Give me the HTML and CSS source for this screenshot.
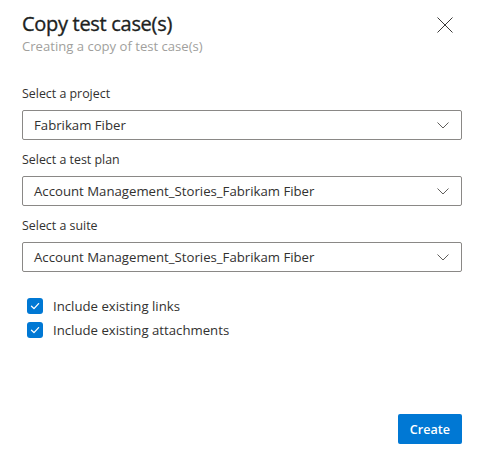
FILE: index.html
```html
<!DOCTYPE html>
<html lang="en">
<head>
<meta charset="utf-8">
<title>Copy test case(s)</title>
<link rel="stylesheet" href="styles.css">
</head>
<body>
<div class="dialog">
  <div class="header">
    <div class="titles">
      <h1 class="title">Copy test case(s)</h1>
      <div class="subtitle">Creating a copy of test case(s)</div>
    </div>
    <button class="close" aria-label="Close">
      <svg width="16" height="16" viewBox="0 0 16 16"><path d="M0.5 0.5 L15.5 15.5 M15.5 0.5 L0.5 15.5" stroke="#3b3a39" stroke-width="1" fill="none"/></svg>
    </button>
  </div>

  <div class="fields">
    <div class="field">
      <div class="label">Select a project</div>
      <div class="dropdown">
        <span class="value">Fabrikam Fiber</span>
        <svg class="chev" width="12" height="7" viewBox="0 0 12 7"><path d="M0.5 0.5 L6 6 L11.5 0.5" stroke="#605e5c" stroke-width="1" fill="none"/></svg>
      </div>
    </div>
    <div class="field">
      <div class="label">Select a test plan</div>
      <div class="dropdown">
        <span class="value">Account Management_Stories_Fabrikam Fiber</span>
        <svg class="chev" width="12" height="7" viewBox="0 0 12 7"><path d="M0.5 0.5 L6 6 L11.5 0.5" stroke="#605e5c" stroke-width="1" fill="none"/></svg>
      </div>
    </div>
    <div class="field">
      <div class="label">Select a suite</div>
      <div class="dropdown">
        <span class="value">Account Management_Stories_Fabrikam Fiber</span>
        <svg class="chev" width="12" height="7" viewBox="0 0 12 7"><path d="M0.5 0.5 L6 6 L11.5 0.5" stroke="#605e5c" stroke-width="1" fill="none"/></svg>
      </div>
    </div>
  </div>

  <div class="checks">
    <label class="check">
      <span class="box"><svg width="16" height="16" viewBox="0 0 16 16"><path d="M4.5 8.2 L7 10.6 L11.6 5.6" stroke="#fff" stroke-width="1.3" fill="none" stroke-linecap="round" stroke-linejoin="round"/></svg></span>
      <span class="check-text">Include existing links</span>
    </label>
    <label class="check">
      <span class="box"><svg width="16" height="16" viewBox="0 0 16 16"><path d="M4.5 8.2 L7 10.6 L11.6 5.6" stroke="#fff" stroke-width="1.3" fill="none" stroke-linecap="round" stroke-linejoin="round"/></svg></span>
      <span class="check-text">Include existing attachments</span>
    </label>
  </div>

  <div class="footer">
    <button class="primary">Create</button>
  </div>
</div>
</body>
</html>
```

FILE: styles.css
```css
* { box-sizing: border-box; }
html, body {
  margin: 0;
  padding: 0;
  background: #ffffff;
}
body {
  font-family: "Open Sans", "Noto Sans", sans-serif;
  color: #323130;
}
.dialog {
  height: 461px;
  padding: 11px 18px 17px 22px;
  display: flex;
  flex-direction: column;
}
.header {
  display: flex;
  justify-content: space-between;
  align-items: flex-start;
}
.title {
  margin: 0;
  font-size: 20px;
  line-height: 26px;
  font-weight: 400;
  letter-spacing: -0.3px;
  -webkit-text-stroke: 0.35px #201f1e;
  color: #201f1e;
}
.subtitle {
  font-size: 13.1px;
  line-height: 18px;
  color: #a19f9d;
}
.close {
  border: 0;
  background: none;
  padding: 0;
  margin: 6px 9px 0 0;
  width: 16px;
  height: 16px;
  display: block;
}
.close svg { display: block; }
.fields {
  margin-top: 29px;
  display: flex;
  flex-direction: column;
  gap: 10px;
}
.label {
  font-size: 12.4px;
  line-height: 20px;
  margin-bottom: 6px;
}
.dropdown {
  height: 30px;
  border: 1px solid #8a8886;
  border-radius: 2px;
  padding: 4px 12px 4px 11px;
  display: flex;
  align-items: center;
  justify-content: space-between;
  font-size: 13.2px;
  line-height: 20px;
}
.chev { display: block; }
.checks {
  margin-top: 24px;
  margin-left: 5px;
  display: flex;
  flex-direction: column;
  gap: 4px;
}
.check {
  display: flex;
  align-items: center;
  gap: 10px;
  font-size: 13.2px;
  line-height: 20px;
}
.box {
  width: 16px;
  height: 16px;
  border-radius: 3px;
  background: #0078d4;
  display: block;
}
.box svg { display: block; }
.footer {
  margin-top: auto;
  display: flex;
  justify-content: flex-end;
}
.primary {
  height: 30px;
  padding: 0 12px;
  border: 0;
  border-radius: 2px;
  background: #0078d4;
  color: #ffffff;
  font-family: inherit;
  font-size: 12.6px;
  font-weight: 600;
}
```
